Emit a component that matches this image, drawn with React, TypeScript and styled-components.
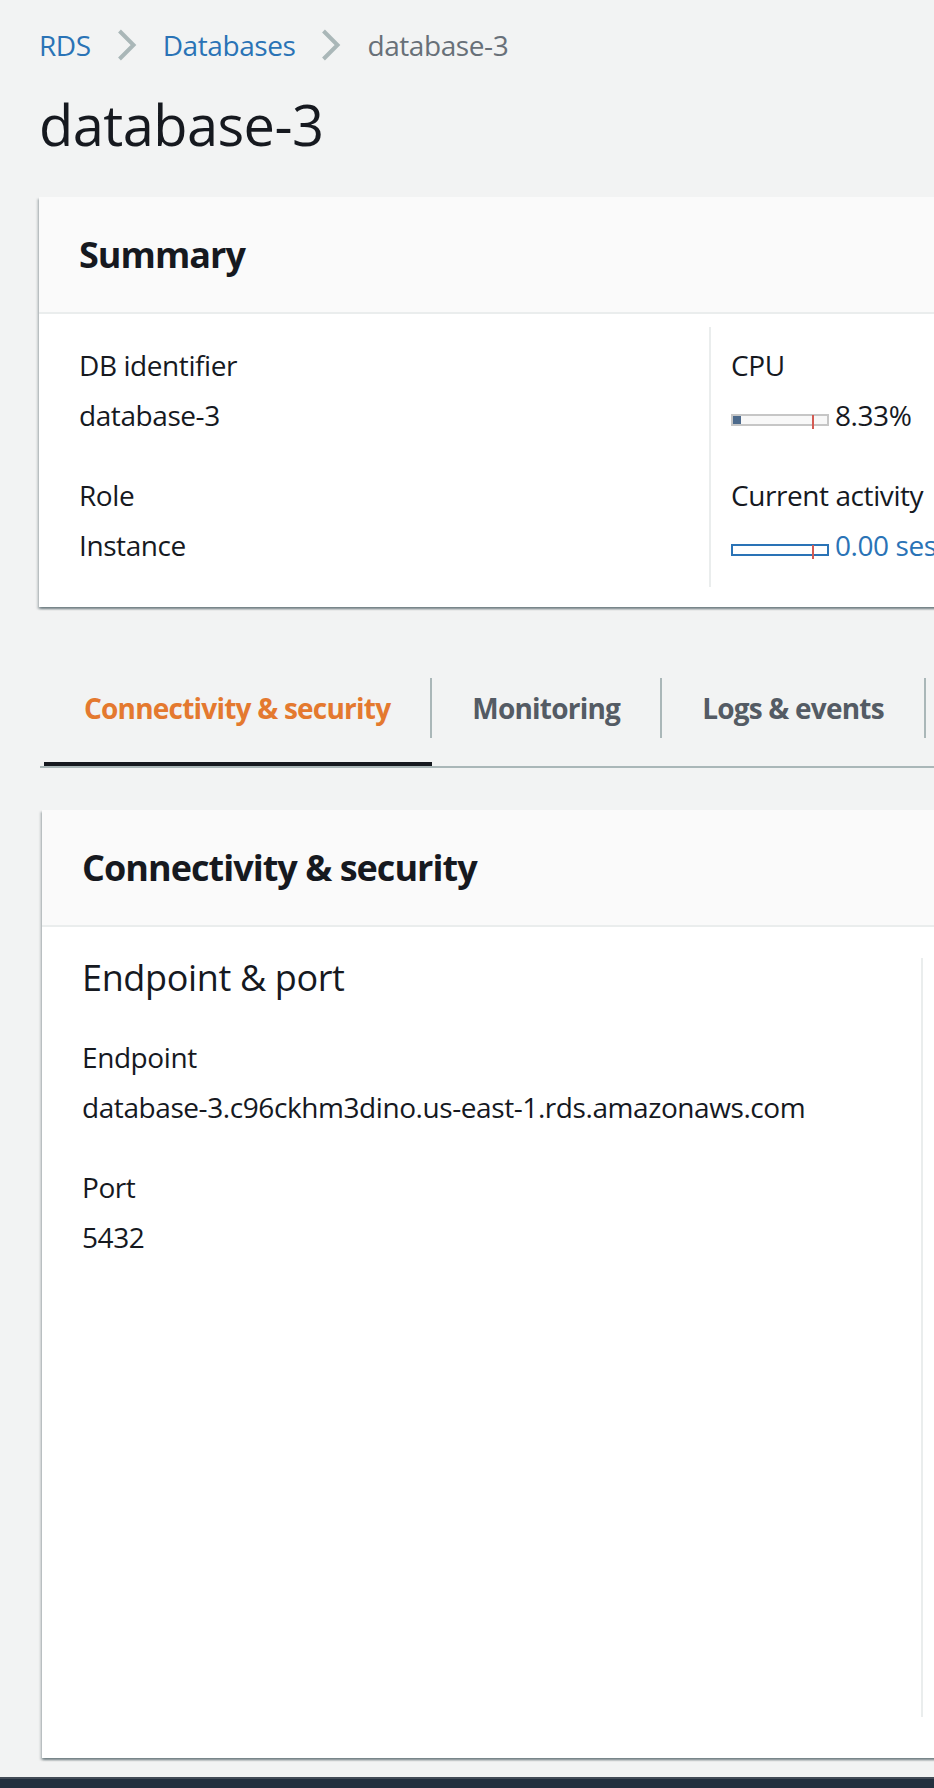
import React from "react";
import styled, { createGlobalStyle } from "styled-components";

const TEXT = "#16191f";
const LINK = "#2a73b6";
const MUTED = "#687078";
const GREY_LINE = "#aab7b8";
const DIVIDER = "#eaeded";
const ORANGE = "#e4792f";

const GlobalStyle = createGlobalStyle`
  html, body {
    margin: 0;
    padding: 0;
    overflow: hidden;
    background: #f2f3f3;
  }
  body {
    font-family: "Open Sans", "Noto Sans", sans-serif;
    color: ${TEXT};
    -webkit-font-smoothing: antialiased;
  }
  * { box-sizing: border-box; }
`;

const Page = styled.div`
  width: 100%;
  min-height: 1788px;
  overflow: hidden;
  display: flex;
  flex-direction: column;
`;

const Main = styled.main`
  width: 1600px;
  padding: 25px 0 0 39px;
  display: flex;
  flex-direction: column;
  align-items: flex-start;
`;

const Crumbs = styled.nav`
  display: flex;
  align-items: center;
  font-size: 28px;
  line-height: 40px;
  letter-spacing: -0.015em;
  white-space: nowrap;
`;

const CrumbLink = styled.a`
  color: ${LINK};
  text-decoration: none;
`;

const CrumbCurrent = styled.span`
  color: ${MUTED};
`;

const ChevronSvg = styled.svg`
  flex: none;
  margin: 0 26px;
  display: block;
`;

const Chevron = () => (
  <ChevronSvg width="20" height="32" viewBox="0 0 20 32" aria-hidden="true">
    <path d="M2.5 2 L16.5 16 L2.5 30" fill="none" stroke={GREY_LINE} strokeWidth="4" />
  </ChevronSvg>
);

const Title = styled.h1`
  margin: 19px 0 0;
  font-size: 56px;
  line-height: 80px;
  font-weight: 400;
  letter-spacing: -0.01em;
`;

const Card = styled.section<{ $top: number; $indent?: number }>`
  width: 1500px;
  margin-top: ${(p) => p.$top}px;
  margin-left: ${(p) => p.$indent ?? 0}px;
  background: #ffffff;
  box-shadow: 0 2px 2px 0 rgba(0, 28, 36, 0.35), 2px 2px 2px 0 rgba(0, 28, 36, 0.15),
    -2px 2px 2px 0 rgba(0, 28, 36, 0.15);
`;

const CardHeader = styled.header`
  background: #fafafa;
  padding: 32px 40px 31px;
  border-bottom: 2px solid ${DIVIDER};
`;

const CardTitle = styled.h2`
  margin: 0;
  font-size: 36px;
  line-height: 52px;
  font-weight: 700;
  letter-spacing: -0.027em;
  white-space: nowrap;
`;

const CardBody = styled.div<{ $pt: number; $pb: number }>`
  display: flex;
  padding: ${(p) => p.$pt}px 0 ${(p) => p.$pb}px;
`;

const Column = styled.div<{
  $width?: number;
  $divider?: boolean;
  $pt?: number;
  $pb?: number;
  $minHeight?: number;
}>`
  flex: ${(p) => (p.$width ? "none" : "1")};
  width: ${(p) => (p.$width ? `${p.$width}px` : "auto")};
  min-height: ${(p) => p.$minHeight ?? 0}px;
  padding: ${(p) => p.$pt ?? 0}px ${(p) => (p.$divider ? 20 : 40)}px ${(p) => p.$pb ?? 0}px;
  border-left: ${(p) => (p.$divider ? `2px solid ${DIVIDER}` : "none")};
  display: flex;
  flex-direction: column;
  gap: 40px;
`;

const Pair = styled.div`
  display: flex;
  flex-direction: column;
  gap: 10px;
`;

const Label = styled.div`
  font-size: 28px;
  line-height: 40px;
  letter-spacing: -0.015em;
  white-space: nowrap;
`;

const Value = styled.div`
  font-size: 28px;
  line-height: 40px;
  letter-spacing: -0.015em;
  white-space: nowrap;
`;

const SectionHeading = styled.h3`
  margin: 0 0 -1px;
  font-size: 36px;
  line-height: 40px;
  font-weight: 400;
  letter-spacing: -0.01em;
  white-space: nowrap;
`;

const MeterRow = styled.div<{ $link?: boolean }>`
  display: flex;
  align-items: baseline;
  font-size: 28px;
  line-height: 40px;
  letter-spacing: -0.015em;
  white-space: nowrap;
  color: ${(p) => (p.$link ? LINK : TEXT)};
`;

const Track = styled.span<{ $link?: boolean }>`
  position: relative;
  display: block;
  flex: none;
  width: 98px;
  height: 12px;
  margin: 0 6px 1px 0;
  border: 2px solid ${(p) => (p.$link ? LINK : "#c6c6c6")};
  background: ${(p) => (p.$link ? "#ffffff" : "#f8f8f8")};
`;

const Fill = styled.span`
  position: absolute;
  left: 0;
  top: 0;
  bottom: 0;
  background: #4d6a8c;
`;

const Threshold = styled.span`
  position: absolute;
  left: 79px;
  top: -1px;
  width: 2px;
  height: 14px;
  background: #d45b53;
`;

const Meter = ({ percent, link, text }: { percent: number; link?: boolean; text: string }) => (
  <MeterRow $link={link}>
    <Track $link={link}>
      {percent > 0 && <Fill style={{ width: `${percent}%` }} />}
      <Threshold />
    </Track>
    <span>{text}</span>
  </MeterRow>
);

const TabList = styled.div`
  display: flex;
  width: 1500px;
  margin: 71px 0 0 1px;
  padding-left: 4px;
  border-bottom: 2px solid ${GREY_LINE};
`;

const Tab = styled.button<{ $active?: boolean }>`
  display: flex;
  margin: 0;
  padding: 0 0 24px;
  border: 0;
  border-bottom: 4px solid ${(p) => (p.$active ? TEXT : "transparent")};
  background: none;
  font: inherit;
  cursor: pointer;
`;

const TabLabel = styled.span<{ $active?: boolean }>`
  display: flex;
  align-items: center;
  height: 60px;
  padding: 0 40px;
  border-right: 2px solid ${GREY_LINE};
  font-family: "Open Sans", "Noto Sans", sans-serif;
  font-size: 28px;
  line-height: 40px;
  font-weight: 700;
  letter-spacing: -0.028em;
  white-space: nowrap;
  color: ${(p) => (p.$active ? ORANGE : "#545b64")};
`;

const Footer = styled.footer`
  width: 100%;
  height: 40px;
  margin-top: 19px;
  background: #232f3e;
  border-top: 2px solid #434c57;
  flex: none;
`;

const tabs = ["Connectivity & security", "Monitoring", "Logs & events"];

export default function App() {
  return (
    <>
      <GlobalStyle />
      <Page>
        <Main>
          <Crumbs aria-label="Breadcrumbs">
            <CrumbLink href="#">RDS</CrumbLink>
            <Chevron />
            <CrumbLink href="#">Databases</CrumbLink>
            <Chevron />
            <CrumbCurrent>database-3</CrumbCurrent>
          </Crumbs>

          <Title>database-3</Title>

          <Card $top={33}>
            <CardHeader>
              <CardTitle>Summary</CardTitle>
            </CardHeader>
            <CardBody $pt={13} $pb={20}>
              <Column $width={670} $pt={18} $pb={22}>
                <Pair>
                  <Label>DB identifier</Label>
                  <Value>database-3</Value>
                </Pair>
                <Pair>
                  <Label>Role</Label>
                  <Value>Instance</Value>
                </Pair>
              </Column>
              <Column $divider $pt={18} $pb={22}>
                <Pair>
                  <Label>CPU</Label>
                  <Meter percent={8.33} text="8.33%" />
                </Pair>
                <Pair>
                  <Label>Current activity</Label>
                  <Meter percent={0} link text="0.00 sessions" />
                </Pair>
              </Column>
            </CardBody>
          </Card>

          <TabList role="tablist">
            {tabs.map((t, i) => (
              <Tab key={t} role="tab" $active={i === 0} aria-selected={i === 0}>
                <TabLabel $active={i === 0}>{t}</TabLabel>
              </Tab>
            ))}
          </TabList>

          <Card $top={42} $indent={3}>
            <CardHeader>
              <CardTitle>Connectivity &amp; security</CardTitle>
            </CardHeader>
            <CardBody $pt={31} $pb={41}>
              <Column $width={879} $minHeight={759}>
                <SectionHeading>Endpoint &amp; port</SectionHeading>
                <Pair>
                  <Label>Endpoint</Label>
                  <Value>database-3.c96ckhm3dino.us-east-1.rds.amazonaws.com</Value>
                </Pair>
                <Pair>
                  <Label>Port</Label>
                  <Value>5432</Value>
                </Pair>
              </Column>
              <Column $divider $minHeight={759} />
            </CardBody>
          </Card>
        </Main>
        <Footer />
      </Page>
    </>
  );
}
